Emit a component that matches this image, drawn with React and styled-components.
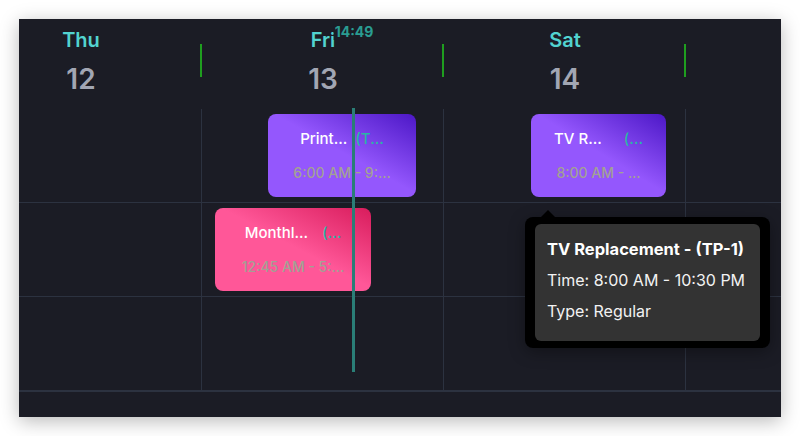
import React from 'react';
import styled, { createGlobalStyle } from 'styled-components';

const COL = 242;

const GlobalStyle = createGlobalStyle`
  body {
    margin: 0;
    background: #ffffff;
    font-family: Inter, "Noto Sans", "Liberation Sans", sans-serif;
  }
`;

const Page = styled.div`
  padding: 19px;
`;

const Panel = styled.div`
  position: relative;
  width: 762px;
  height: 398px;
  background: #1b1c25;
  overflow: hidden;
  box-shadow: 0 4px 18px rgba(0, 0, 0, 0.28);
`;

const Track = styled.div`
  position: relative;
  margin-left: -59px;
  width: ${COL * 4}px;
`;

const HeaderRow = styled.div`
  display: grid;
  grid-template-columns: repeat(4, ${COL}px);
  height: 90px;
`;

const DayHead = styled.div`
  position: relative;
  display: flex;
  flex-direction: column;
  align-items: center;
  padding-top: 9px;
  gap: 11px;

  &::after {
    content: '';
    display: ${p => (p.$divider ? 'block' : 'none')};
    position: absolute;
    right: 0;
    top: 25px;
    width: 2px;
    height: 33px;
    background: #1f9e1f;
  }
`;

const DayName = styled.div`
  font-size: 20px;
  line-height: 24px;
  font-weight: 600;
  color: #52d3d0;
`;

const DayNum = styled.div`
  font-size: 28px;
  line-height: 32px;
  font-weight: 600;
  color: #a2a6b3;
`;

const Body = styled.div`
  position: relative;
  display: grid;
  grid-template-columns: repeat(4, ${COL}px);
  grid-auto-rows: 94px;
  border-bottom: 1px solid #2c3240;
`;

const Cell = styled.div`
  box-sizing: border-box;
  border-right: 1px solid #2c3240;
  border-bottom: 1px solid #2c3240;
`;

const Event = styled.div`
  position: absolute;
  box-sizing: border-box;
  height: 83px;
  padding: 15px 12px 0;
  border-radius: 8px;
  display: flex;
  flex-direction: column;
  align-items: center;
  gap: 14px;
  white-space: nowrap;
  background: ${p => p.$tone === 'pink'
    ? 'linear-gradient(to top right, #ff5798 52%, #d81c5c 100%)'
    : 'linear-gradient(to top right, #9457fd 52%, #4c17c6 100%)'};
`;

const TitleRow = styled.div`
  display: flex;
  justify-content: center;
  gap: ${p => p.$gap}px;
  font-size: 15px;
  line-height: 20px;
  font-weight: 500;
`;

const EventName = styled.span`
  color: #ffffff;
`;

const EventCode = styled.span`
  color: #2bb6a6;
`;

const EventTime = styled.div`
  font-size: 14px;
  line-height: 20px;
  font-weight: 500;
  color: #a3a194;
`;

const NowLine = styled.div`
  position: absolute;
  top: -1px;
  left: 392px;
  width: 3px;
  height: 264px;
  background: #2a7e77;
`;

const NowLabel = styled.div`
  position: absolute;
  top: 4px;
  left: 394px;
  transform: translateX(-50%);
  padding: 0 1px;
  background: #1b1c25;
  font-size: 14px;
  line-height: 17px;
  font-weight: 700;
  color: #2a9c92;
`;

const Tooltip = styled.div`
  position: absolute;
  left: 565px;
  top: 108px;
  width: 245px;
  box-sizing: border-box;
  padding: 7px 10px;
  background: #000000;
  border-radius: 8px;
  box-shadow: 0 4px 16px rgba(0, 0, 0, 0.35);

  &::before {
    content: '';
    position: absolute;
    left: 16px;
    top: -7px;
    border-left: 7px solid transparent;
    border-right: 7px solid transparent;
    border-bottom: 7px solid #000000;
  }
`;

const TipBox = styled.div`
  background: #333333;
  border-radius: 6px;
  padding: 10px 12px 14px;
  color: #f2f2f2;
  font-size: 16px;
  line-height: 31px;
  white-space: nowrap;
`;

const TipTitle = styled.div`
  font-weight: 700;
  font-size: 16.5px;
  color: #ffffff;
`;

const days = [
  { name: 'Thu', num: 12 },
  { name: 'Fri', num: 13 },
  { name: 'Sat', num: 14 },
];

const events = [
  { name: 'Print...', code: '(T...', time: '6:00 AM - 9:...', left: 308, top: 5, width: 148, gap: 8, tone: 'purple' },
  { name: 'Monthl...', code: '(...', time: '12:45 AM - 5:...', left: 255, top: 99, width: 156, gap: 14, tone: 'pink' },
  { name: 'TV R...', code: '(...', time: '8:00 AM - ...', left: 571, top: 5, width: 135, gap: 22, tone: 'purple' },
];

export default function App() {
  return (
    <Page>
      <GlobalStyle />
      <Panel>
        <Track>
          <HeaderRow>
            {days.map(d => (
              <DayHead key={d.name} $divider>
                <DayName>{d.name}</DayName>
                <DayNum>{d.num}</DayNum>
              </DayHead>
            ))}
            <DayHead />
          </HeaderRow>
          <NowLabel>14:49</NowLabel>
          <Body>
            {Array.from({ length: 12 }).map((_, i) => <Cell key={i} />)}
            {events.map(e => (
              <Event
                key={e.name}
                $tone={e.tone}
                style={{ left: e.left, top: e.top, width: e.width }}
              >
                <TitleRow $gap={e.gap}>
                  <EventName>{e.name}</EventName>
                  <EventCode>{e.code}</EventCode>
                </TitleRow>
                <EventTime>{e.time}</EventTime>
              </Event>
            ))}
            <NowLine />
            <Tooltip>
              <TipBox>
                <TipTitle>TV Replacement - (TP-1)</TipTitle>
                <div>Time: 8:00 AM - 10:30 PM</div>
                <div>Type: Regular</div>
              </TipBox>
            </Tooltip>
          </Body>
        </Track>
      </Panel>
    </Page>
  );
}
